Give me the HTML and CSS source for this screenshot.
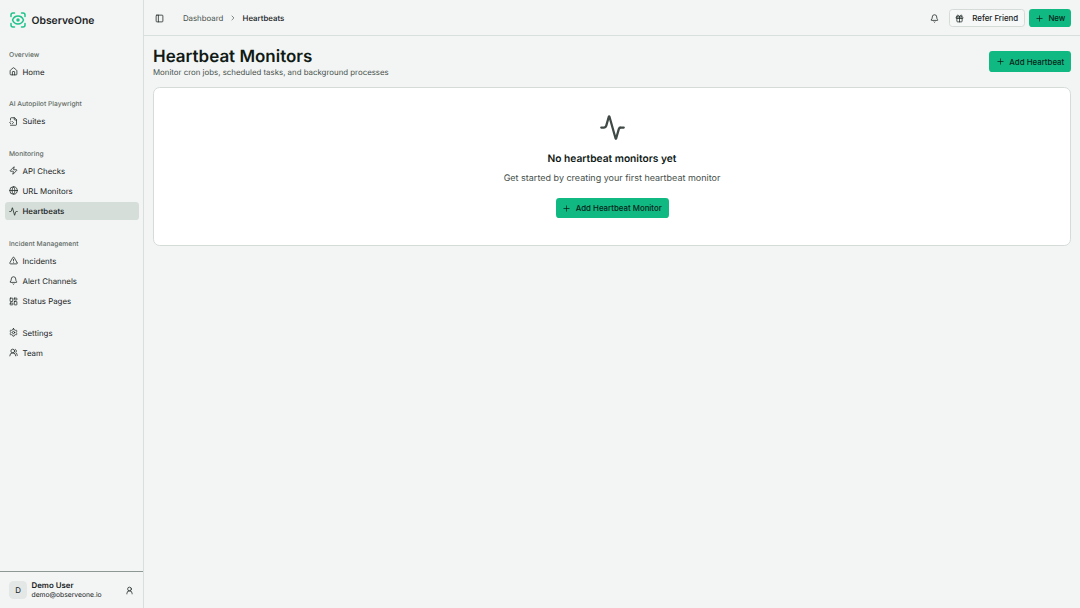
FILE: index.html
```
<!DOCTYPE html>
<html lang="en">
<head>
  <meta charset="UTF-8" />
  <title>Heartbeats - ObserveOne</title>
  <meta name="viewport" content="width=device-width, initial-scale=1.0" />
  <link rel="stylesheet" href="styles.css">
</head>
<body>
  <aside class="sidebar">
    <div class="brand">
      <svg class="brand-logo" viewBox="0 0 32 32">
        <path d="M2 9V6a4 4 0 0 1 4-4h3M23 2h3a4 4 0 0 1 4 4v3M30 23v3a4 4 0 0 1-4 4h-3M9 30H6a4 4 0 0 1-4-4v-3" />
        <path d="M5 16c2-5 6-8 11-8s9 3 11 8c-2 5-6 8-11 8s-9-3-11-8z" />
        <circle class="pupil" cx="16" cy="16" r="3.500" />
      </svg>
      <span>ObserveOne</span>
    </div>

    <nav class="nav">
      <div class="nav-group">
        <div class="nav-label">Overview</div>
        <a class="nav-item">
          <svg class="icon" viewBox="0 0 24 24"><path d="M15 21v-8a1 1 0 0 0-1-1h-4a1 1 0 0 0-1 1v8" /><path d="M3 10a2 2 0 0 1 .709-1.528l7-5.999a2 2 0 0 1 2.582 0l7 5.999A2 2 0 0 1 21 10v9a2 2 0 0 1-2 2H5a2 2 0 0 1-2-2z" /></svg>
          Home
        </a>
      </div>

      <div class="nav-group">
        <div class="nav-label">AI Autopilot Playwright</div>
        <a class="nav-item">
          <svg class="icon" viewBox="0 0 24 24"><path d="M4 22h14a2 2 0 0 0 2-2V7l-5-5H6a2 2 0 0 0-2 2v4" /><path d="M14 2v4a2 2 0 0 0 2 2h4" /><path d="m5 12-3 3 3 3" /><path d="m9 18 3-3-3-3" /></svg>
          Suites
        </a>
      </div>

      <div class="nav-group">
        <div class="nav-label">Monitoring</div>
        <a class="nav-item">
          <svg class="icon" viewBox="0 0 24 24"><path d="M4 14a1 1 0 0 1-.78-1.63l9.9-10.2a.5.5 0 0 1 .86.46l-1.920 6.020A1 1 0 0 0 13 10h7a1 1 0 0 1 .78 1.630l-9.900 10.200a.5.5 0 0 1-.86-.46l1.920-6.020A1 1 0 0 0 11 14z" /></svg>
          API Checks
        </a>
        <a class="nav-item">
          <svg class="icon" viewBox="0 0 24 24"><circle cx="12" cy="12" r="10" /><path d="M12 2a14.500 14.500 0 0 0 0 20 14.500 14.500 0 0 0 0-20" /><path d="M2 12h20" /></svg>
          URL Monitors
        </a>
        <a class="nav-item active">
          <svg class="icon" viewBox="0 0 24 24"><path d="M22 12h-2.480a2 2 0 0 0-1.930 1.460l-2.350 8.360a.25.25 0 0 1-.48 0L9.240 2.180a.25.25 0 0 0-.48 0l-2.350 8.360A2 2 0 0 1 4.490 12H2" /></svg>
          Heartbeats
        </a>
      </div>

      <div class="nav-group">
        <div class="nav-label">Incident Management</div>
        <a class="nav-item">
          <svg class="icon" viewBox="0 0 24 24"><path d="m21.730 18-8-14a2 2 0 0 0-3.480 0l-8 14A2 2 0 0 0 4 21h16a2 2 0 0 0 1.730-3" /><path d="M12 9v4" /><path d="M12 17h.01" /></svg>
          Incidents
        </a>
        <a class="nav-item">
          <svg class="icon" viewBox="0 0 24 24"><path d="M10.268 21a2 2 0 0 0 3.464 0" /><path d="M3.262 15.326A1 1 0 0 0 4 17h16a1 1 0 0 0 .74-1.673C19.410 13.956 18 12.499 18 8A6 6 0 0 0 6 8c0 4.499-1.411 5.956-2.738 7.326" /></svg>
          Alert Channels
        </a>
        <a class="nav-item">
          <svg class="icon" viewBox="0 0 24 24"><rect width="7" height="9" x="3" y="3" rx="1" /><rect width="7" height="5" x="14" y="3" rx="1" /><rect width="7" height="9" x="14" y="12" rx="1" /><rect width="7" height="5" x="3" y="16" rx="1" /></svg>
          Status Pages
        </a>
      </div>

      <div class="nav-group">
        <a class="nav-item">
          <svg class="icon" viewBox="0 0 24 24"><path d="M12.220 2h-.44a2 2 0 0 0-2 2v.18a2 2 0 0 1-1 1.730l-.43.25a2 2 0 0 1-2 0l-.15-.08a2 2 0 0 0-2.730.73l-.22.38a2 2 0 0 0 .73 2.730l.15.1a2 2 0 0 1 1 1.720v.51a2 2 0 0 1-1 1.740l-.15.09a2 2 0 0 0-.73 2.730l.22.38a2 2 0 0 0 2.730.73l.15-.08a2 2 0 0 1 2 0l.43.25a2 2 0 0 1 1 1.730V20a2 2 0 0 0 2 2h.44a2 2 0 0 0 2-2v-.18a2 2 0 0 1 1-1.730l.43-.25a2 2 0 0 1 2 0l.15.08a2 2 0 0 0 2.730-.73l.22-.39a2 2 0 0 0-.73-2.730l-.15-.08a2 2 0 0 1-1-1.740v-.5a2 2 0 0 1 1-1.740l.15-.09a2 2 0 0 0 .73-2.730l-.22-.38a2 2 0 0 0-2.730-.73l-.15.08a2 2 0 0 1-2 0l-.43-.25a2 2 0 0 1-1-1.730V4a2 2 0 0 0-2-2z" /><circle cx="12" cy="12" r="3" /></svg>
          Settings
        </a>
        <a class="nav-item">
          <svg class="icon" viewBox="0 0 24 24"><path d="M18 21a8 8 0 0 0-16 0" /><circle cx="10" cy="8" r="5" /><path d="M22 20c0-3.370-2-6.500-4-8a5 5 0 0 0-.45-8.300" /></svg>
          Team
        </a>
      </div>
    </nav>

    <div class="user">
      <div class="avatar">D</div>
      <div class="user-info">
        <strong>Demo User</strong>
        <span>demo@observeone.io</span>
      </div>
      <svg class="icon" viewBox="0 0 24 24"><circle cx="12" cy="8" r="5" /><path d="M19 21v-1a7 7 0 0 0-14 0v1" /></svg>
    </div>
  </aside>

  <div class="page">
    <header class="topbar">
      <svg class="icon toggle" viewBox="0 0 24 24"><rect width="18" height="18" x="3" y="3" rx="2" /><path d="M9 3v18" /></svg>
      <div class="breadcrumb">
        <span>Dashboard</span>
        <svg class="chevron" viewBox="0 0 24 24"><path d="m9 18 6-6-6-6" /></svg>
        <span class="current">Heartbeats</span>
      </div>
      <div class="actions">
        <svg class="icon bell" viewBox="0 0 24 24"><path d="M10.268 21a2 2 0 0 0 3.464 0" /><path d="M3.262 15.326A1 1 0 0 0 4 17h16a1 1 0 0 0 .74-1.673C19.410 13.956 18 12.499 18 8A6 6 0 0 0 6 8c0 4.499-1.411 5.956-2.738 7.326" /></svg>
        <button class="btn btn-outline btn-sm refer">
          <svg class="icon" viewBox="0 0 24 24"><rect x="3" y="8" width="18" height="4" rx="1" /><path d="M12 8v13" /><path d="M19 12v7a2 2 0 0 1-2 2H7a2 2 0 0 1-2-2v-7" /><path d="M7.500 8a2.500 2.500 0 0 1 0-5A4.800 8 0 0 1 12 8a4.800 8 0 0 1 4.500-5 2.500 2.500 0 0 1 0 5" /></svg>
          Refer Friend
        </button>
        <button class="btn btn-sm">
          <svg class="icon" viewBox="0 0 24 24"><path d="M5 12h14" /><path d="M12 5v14" /></svg>
          New
        </button>
      </div>
    </header>

    <main class="content">
      <div class="page-head">
        <div>
          <h1>Heartbeat Monitors</h1>
          <p>Monitor cron jobs, scheduled tasks, and background processes</p>
        </div>
        <button class="btn">
          <svg class="icon" viewBox="0 0 24 24"><path d="M5 12h14" /><path d="M12 5v14" /></svg>
          Add Heartbeat
        </button>
      </div>

      <section class="card">
        <svg class="card-icon" viewBox="0 0 24 24"><path d="M22 12h-2.480a2 2 0 0 0-1.930 1.460l-2.350 8.360a.25.25 0 0 1-.48 0L9.240 2.180a.25.25 0 0 0-.48 0l-2.350 8.360A2 2 0 0 1 4.490 12H2" /></svg>
        <h3>No heartbeat monitors yet</h3>
        <p>Get started by creating your first heartbeat monitor</p>
        <button class="btn">
          <svg class="icon" viewBox="0 0 24 24"><path d="M5 12h14" /><path d="M12 5v14" /></svg>
          Add Heartbeat Monitor
        </button>
      </section>
    </main>
  </div>
</body>
</html>
```
FILE: styles.css
```
* {
  box-sizing: border-box;
  margin: 0;
  padding: 0;
}
html {
  font-size: 9px;
}
body {
  display: flex;
  height: 100vh;
  overflow: hidden;
  background: #f3f5f4;
  color: #17211d;
  font-family: Inter, sans-serif;
  font-size: 0.875rem;
  line-height: 12px;
  text-rendering: geometricPrecision;
}
svg {
  display: block;
  flex-shrink: 0;
  fill: none;
  stroke: currentColor;
  stroke-width: 2;
  stroke-linecap: round;
  stroke-linejoin: round;
}
.icon {
  width: 1rem;
  height: 1rem;
}

/* sidebar */
.sidebar {
  display: flex;
  flex-direction: column;
  width: 16rem;
  flex-shrink: 0;
  border-right: 1px solid #d9dfdc;
}
.brand {
  display: flex;
  align-items: center;
  gap: 0.5rem;
  height: 4.45rem;
  padding: 0 1rem;
  font-size: 1.15rem;
  font-weight: 600;
}
.brand span {
  padding-top: 1px;
}
.brand-logo {
  width: 2rem;
  height: 2rem;
  padding: 1px;
  color: #1fc28b;
  stroke-width: 3;
}
.pupil {
  fill: currentColor;
  stroke: none;
}
.nav {
  display: flex;
  flex-direction: column;
  gap: 0.5rem;
  flex: 1;
}
.nav-group {
  display: flex;
  flex-direction: column;
  gap: 0.25rem;
  padding: 0.5rem;
}
.nav-label {
  height: 2rem;
  margin-bottom: -0.25rem;
  padding: 0 0.5rem;
  font-size: 0.745rem;
  font-weight: 500;
  line-height: 20px;
  color: #5f6964;
}
.nav-item {
  display: flex;
  align-items: center;
  gap: 0.5rem;
  height: 2rem;
  padding: 0 0.5rem;
  border-radius: 0.375rem;
}
.nav-item.active {
  background: #d5ded9;
  font-weight: 500;
}
.user {
  display: flex;
  align-items: center;
  gap: 0.5rem;
  height: 37px;
  padding: 0 1rem;
  border-top: 1px solid #8d9893;
}
.avatar {
  width: 2rem;
  height: 2rem;
  border-radius: 0.5rem;
  background: #e3e7e5;
  line-height: 2rem;
  text-align: center;
}
.user-info {
  display: flex;
  flex-direction: column;
  flex: 1;
}
.user-info strong {
  font-weight: 600;
  line-height: 1.1rem;
}
.user-info span {
  font-size: 0.75rem;
  line-height: 1rem;
}

/* top bar */
.page {
  flex: 1;
  min-width: 0;
}
.topbar {
  display: flex;
  align-items: center;
  height: 36px;
  padding: 1px 1rem 0;
  border-bottom: 1px solid #d9dfdc;
}
.toggle {
  margin-left: 2px;
}
.breadcrumb {
  display: flex;
  align-items: center;
  gap: 0.625rem;
  margin-left: 2.1rem;
  color: #46504b;
}
.chevron {
  width: 0.875rem;
  height: 0.875rem;
}
.breadcrumb .current {
  color: #17211d;
  font-weight: 500;
}
.actions {
  display: flex;
  align-items: center;
  gap: 0.5rem;
  margin-left: auto;
}
.bell {
  margin-right: 0.6rem;
}

/* buttons */
.btn {
  display: inline-flex;
  align-items: center;
  gap: 0.5rem;
  height: 2.25rem;
  padding: 0 0.75rem;
  border: none;
  border-radius: 0.375rem;
  background: #10b981;
  color: #06241a;
  font-family: inherit;
  font-size: 0.875rem;
  font-weight: 500;
  white-space: nowrap;
}
.btn-sm {
  height: 2rem;
  padding: 0 0.625rem;
}
.btn-outline {
  border: 1px solid #d5dcd8;
  background: #f6f8f7;
  color: #17211d;
}
.refer {
  gap: 0.875rem;
}

/* content */
.content {
  padding: 1rem;
}
.page-head {
  display: flex;
  align-items: center;
  justify-content: space-between;
  margin-bottom: 1rem;
}
.page-head h1 {
  margin-bottom: -3px;
  font-size: 1.885rem;
  font-weight: 600;
  line-height: 24px;
  color: #101a16;
}
.page-head p {
  color: #46504b;
}
.card {
  display: flex;
  flex-direction: column;
  align-items: center;
  height: 158.5px;
  padding-top: 26px;
  border: 1px solid #d5dcd8;
  border-radius: 0.75rem;
  background: #fff;
}
.card-icon {
  width: 3rem;
  height: 3rem;
  margin-bottom: 1rem;
  color: #3f4945;
}
.card h3 {
  margin-bottom: 4px;
  font-size: 1.135rem;
  font-weight: 600;
  line-height: 18px;
  color: #101a16;
}
.card p {
  margin-bottom: 12px;
  font-size: 1rem;
  line-height: 14px;
  color: #46504b;
}
```
